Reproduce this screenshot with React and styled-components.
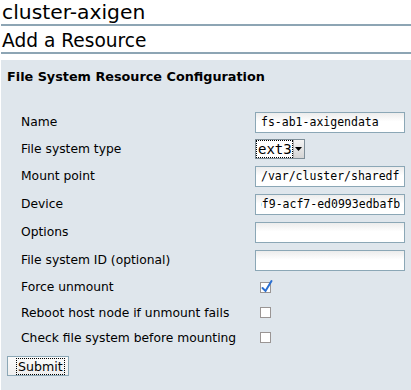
import React, { useEffect, useRef } from 'react'
import styled, { createGlobalStyle } from 'styled-components'

const GlobalStyle = createGlobalStyle`
  body {
    margin: 0;
    background: #fff;
    font-family: "DejaVu Sans", Verdana, sans-serif;
    color: #000;
  }
`

const Page = styled.div`
  width: 411px;
  height: 390px;
  overflow: hidden;
  padding-left: 1px;
  box-sizing: border-box;
`

const Title = styled.h1`
  margin: 0;
  height: ${props => props.h}px;
  box-sizing: border-box;
  padding: ${props => props.pt}px 0 0 1px;
  font-size: ${props => props.size}px;
  font-weight: normal;
  line-height: ${props => props.lh}px;
  border-bottom: 2px solid #8da5b4;
  white-space: nowrap;
  overflow: hidden;
`

const Panel = styled.div`
  margin-top: 6px;
  background: #dfe6ec;
  height: 340px;
  padding: 8px 6px 0;
  box-sizing: border-box;
`

const PanelHeading = styled.div`
  font-size: 12.8px;
  font-weight: bold;
  line-height: 18px;
  height: 40px;
`

const Rows = styled.div`
  display: flex;
  flex-direction: column;
  padding-left: 14px;
`

const Row = styled.div`
  display: grid;
  grid-template-columns: 234px 150px;
  align-items: center;
  height: ${props => props.h}px;
`

const Label = styled.span`
  font-size: 12.3px;
  white-space: nowrap;
`

const TextInput = styled.input`
  width: 150px;
  height: 21px;
  box-sizing: border-box;
  border: 1px solid #8ba7b6;
  background: linear-gradient(#ececec, #ffffff 45%);
  padding: 0 4px 0 5px;
  margin: 0;
  font-family: "DejaVu Sans Mono", monospace;
  font-size: 11.5px;
  color: #000;
  outline: none;
`

const Select = styled.div`
  display: flex;
  width: 50px;
  height: 20px;
  box-sizing: border-box;
  border: 1px solid #7e8e98;
  background: #fff;
`

const SelectValue = styled.span`
  flex: 1;
  border: 1px dotted #000;
  font-family: "DejaVu Sans Mono", monospace;
  font-size: 14px;
  line-height: 16px;
  padding-left: 1px;
`

const SelectArrow = styled.span`
  width: 13px;
  display: flex;
  align-items: center;
  justify-content: center;
  background: linear-gradient(#f4f4f4, #d4d4d4);
  border-left: 1px solid #b0b0b0;
`

const Check = styled.span`
  display: flex;
  margin-left: 5px;
  width: 11px;
  height: 11px;
  box-sizing: border-box;
  border: 1px solid #9a9594;
  background: #fff;
  position: relative;
`

const Tick = styled.svg`
  position: absolute;
  left: 0;
  top: -4px;
`

const SubmitButton = styled.button`
  margin-top: 6px;
  width: 62px;
  height: 20px;
  box-sizing: border-box;
  border: 1px solid #8ba7b6;
  background: linear-gradient(#fafafa, #eeeeee);
  font-family: "DejaVu Sans", Verdana, sans-serif;
  font-size: 12.6px;
  padding: 0 0 0 8px;
  text-align: left;
  color: #000;
`

const Focus = styled.span`
  border: 1px dotted #000;
  padding: 0 1px;
  line-height: 15px;
  display: inline-block;
`

const Field = ({ value, scrollEnd }) => {
  const ref = useRef(null)
  useEffect(() => {
    if (scrollEnd && ref.current) ref.current.scrollLeft = ref.current.scrollWidth
  }, [scrollEnd])
  return <TextInput ref={ref} defaultValue={value} />
}

const CheckBox = ({ checked }) => (
  <Check>
    {checked && (
      <Tick width="13" height="14" viewBox="0 0 13 14">
        <path d="M1.5 9 L4.5 12 L10.5 2" fill="none" stroke="#2a6fd1" strokeWidth="2" strokeLinecap="round" />
      </Tick>
    )}
  </Check>
)

const fields = [
  { label: 'Name', h: 28, kind: 'text', value: 'fs-ab1-axigendata' },
  { label: 'File system type', h: 26, kind: 'select', value: 'ext3' },
  { label: 'Mount point', h: 28, kind: 'text', value: '/var/cluster/sharedfs' },
  { label: 'Device', h: 28, kind: 'text', value: '/dev/disk/by-uuid/3c1a7d2e-4bf9-acf7-ed0993edbafb', end: true },
  { label: 'Options', h: 28, kind: 'text', value: '' },
  { label: 'File system ID (optional)', h: 28, kind: 'text', value: '' },
  { label: 'Force unmount', h: 26, kind: 'check', checked: true },
  { label: 'Reboot host node if unmount fails', h: 25, kind: 'check' },
  { label: 'Check file system before mounting', h: 25, kind: 'check' },
]

const App = () => {
  return (
    <Page>
      <GlobalStyle />
      <Title h={26} lh={24} pt={0} size={20.3}>cluster-axigen</Title>
      <Title h={28} lh={26} pt={2} size={18.6}>Add a Resource</Title>
      <Panel>
        <PanelHeading>File System Resource Configuration</PanelHeading>
        <Rows>
          {fields.map(f => (
            <Row key={f.label} h={f.h}>
              <Label>{f.label}</Label>
              {f.kind === 'text' && <Field value={f.value} scrollEnd={f.end} />}
              {f.kind === 'select' && (
                <Select>
                  <SelectValue>{f.value}</SelectValue>
                  <SelectArrow>
                    <svg width="7" height="4" viewBox="0 0 7 4"><path d="M0 0 H7 L3.5 4 Z" fill="#000" /></svg>
                  </SelectArrow>
                </Select>
              )}
              {f.kind === 'check' && <CheckBox checked={f.checked} />}
            </Row>
          ))}
        </Rows>
        <SubmitButton><Focus>Submit</Focus></SubmitButton>
      </Panel>
    </Page>
  )
}

export default App
